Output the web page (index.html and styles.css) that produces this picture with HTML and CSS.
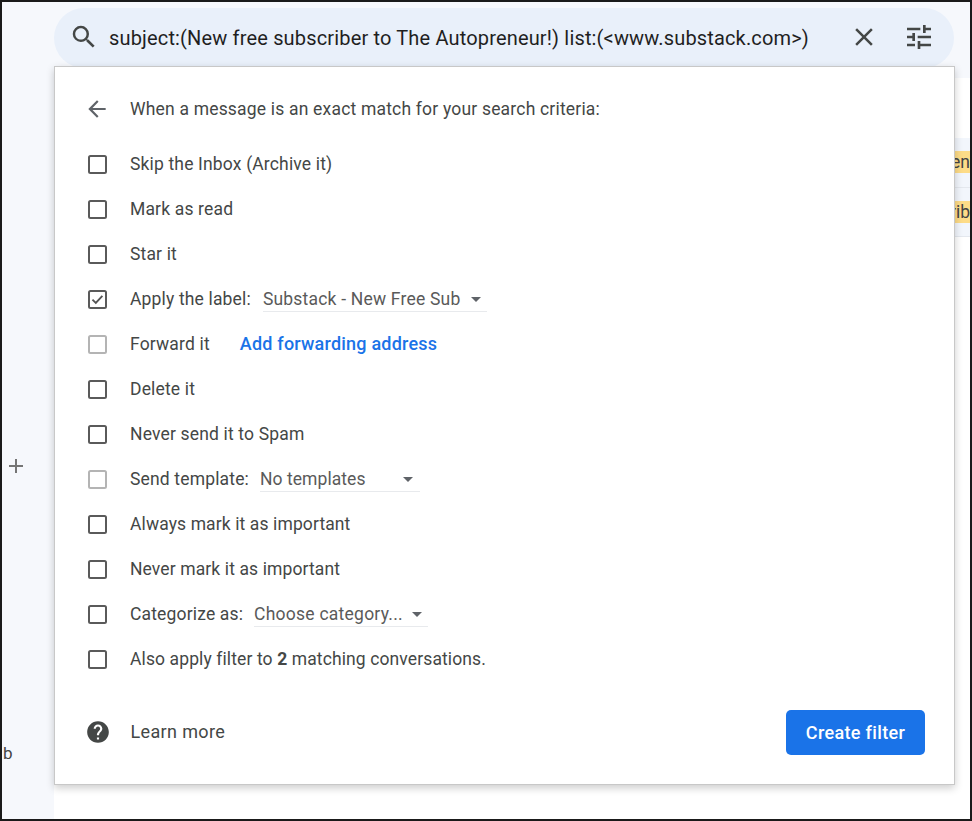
FILE: index.html
```html
<!DOCTYPE html>
<html lang="en">
<head>
<meta charset="utf-8">
<title>Create filter</title>
<link rel="stylesheet" href="styles.css">
</head>
<body>
<div class="frame">
  <aside class="rail">
    <svg class="plus" viewBox="0 0 16 16" width="16" height="16"><path d="M1 8h14M8 1v14"/></svg>
    <span class="rail-b">b</span>
  </aside>
  <main class="content">
    <div class="toolbar"></div>
    <div class="mail-list">
      <div class="mail-row"><span class="tag">en</span></div>
      <div class="mail-row"><span class="tag tag-cut">rib</span></div>
    </div>
  </main>

  <div class="search">
    <svg class="search-icon" viewBox="0 0 24 24" width="30" height="30"><path d="M15.5 14h-.79l-.28-.27A6.47 6.47 0 0 0 16 9.5 6.5 6.5 0 1 0 9.5 16c1.61 0 3.09-.59 4.23-1.57l.27.28v.79l5 4.99L20.49 19l-4.99-5zm-6 0C7.01 14 5 11.99 5 9.5S7.01 5 9.5 5 14 7.01 14 9.5 11.99 14 9.5 14z"/></svg>
    <span class="query">subject:(New free subscriber to The Autopreneur!) list:(&lt;www.substack.com&gt;)</span>
    <svg class="close-icon" viewBox="0 0 24 24" width="30" height="30"><path d="M19 6.41 17.59 5 12 10.59 6.41 5 5 6.41 10.59 12 5 17.59 6.41 19 12 13.41 17.59 19 19 17.59 13.41 12z"/></svg>
    <svg class="tune-icon" viewBox="0 0 24 24" width="32" height="32"><path d="M3 17v2h6v-2H3zM3 5v2h10V5H3zm10 16v-2h8v-2h-8v-2h-2v6h2zM7 9v2H3v2h4v2h2V9H7zm14 4v-2H11v2h10zm-6-4h2V7h4V5h-4V3h-2v6z"/></svg>
  </div>

  <section class="dialog">
    <div class="heading">
      <svg class="back" viewBox="0 0 24 24" width="26" height="26"><path d="M20 11H7.83l5.59-5.59L12 4l-8 8 8 8 1.41-1.41L7.83 13H20v-2z"/></svg>
      <span class="heading-text">When a message is an exact match for your search criteria:</span>
    </div>
    <ul class="options">
      <li class="option"><span class="box"></span><span>Skip the Inbox (Archive it)</span></li>
      <li class="option"><span class="box"></span><span>Mark as read</span></li>
      <li class="option"><span class="box"></span><span>Star it</span></li>
      <li class="option">
        <span class="box"><svg viewBox="0 0 16 16" width="15" height="15"><path d="M2.6 8.2 6.2 11.6 13.2 4.2"/></svg></span>
        <span>Apply the label:</span>
        <span class="select select-label"><span>Substack - New Free Sub</span><i class="caret"></i></span>
      </li>
      <li class="option"><span class="box box-off"></span><span>Forward it</span><a class="link">Add forwarding address</a></li>
      <li class="option"><span class="box"></span><span>Delete it</span></li>
      <li class="option"><span class="box"></span><span>Never send it to Spam</span></li>
      <li class="option">
        <span class="box box-off"></span>
        <span>Send template:</span>
        <span class="select select-template"><span>No templates</span><i class="caret"></i></span>
      </li>
      <li class="option tight"><span class="box"></span><span>Always mark it as important</span></li>
      <li class="option tight"><span class="box"></span><span>Never mark it as important</span></li>
      <li class="option">
        <span class="box"></span>
        <span>Categorize as:</span>
        <span class="select select-category"><span>Choose category...</span><i class="caret"></i></span>
      </li>
      <li class="option tight"><span class="box"></span><span>Also apply filter to <b>2</b> matching conversations.</span></li>
    </ul>
    <div class="footer">
      <div class="help">
        <svg class="help-icon" viewBox="0 0 24 24" width="26" height="26"><path d="M12 2C6.48 2 2 6.48 2 12s4.48 10 10 10 10-4.48 10-10S17.52 2 12 2zm1 17h-2v-2h2v2zm2.07-7.75-.9.92C13.45 12.9 13 13.5 13 15h-2v-.5c0-1.1.45-2.1 1.17-2.83l1.24-1.26c.37-.36.59-.86.59-1.41 0-1.1-.9-2-2-2s-2 .9-2 2H8c0-2.21 1.79-4 4-4s4 1.79 4 4c0 .88-.36 1.68-.93 2.25z"/></svg>
        <span class="help-text">Learn more</span>
      </div>
      <button class="create" type="button">Create filter</button>
    </div>
  </section>
</div>
</body>
</html>
```

FILE: styles.css
```css
* { box-sizing: border-box; }
html, body { margin: 0; padding: 0; height: 100%; }
body {
  background: #000;
  font-family: Roboto, "Noto Sans", Arial, sans-serif;
  color: #444746;
}
.frame {
  position: relative;
  display: flex;
  width: 972px;
  height: 821px;
  border: 2px solid #1a1a1a;
  background: #f6f8fc;
  overflow: hidden;
}
.rail {
  position: relative;
  flex: 0 0 52px;
  background: #f6f8fc;
}
.plus {
  position: absolute;
  left: 6px;
  top: 456px;
  fill: none;
  stroke: #757575;
  stroke-width: 2;
}
.rail-b {
  position: absolute;
  left: 1px;
  top: 741px;
  font-size: 17px;
  line-height: 20px;
  color: #444;
}
.content {
  flex: 1;
  display: flex;
  flex-direction: column;
}
.toolbar { flex: 0 0 76px; background: #f6f8fc; }
.mail-list {
  flex: 1;
  background: #fff;
  padding-top: 60px;
}
.mail-row {
  height: 49.5px;
  display: flex;
  justify-content: flex-end;
  align-items: center;
  background: #f2f6fc;
  border-bottom: 1px solid #e4e8ee;
}
.tag {
  display: block;
  width: 30px;
  height: 22px;
  background: #fddc88;
  font-size: 17.5px;
  line-height: 22px;
  color: #444;
  white-space: nowrap;
  text-align: right;
}
.tag-cut { text-indent: 10px; text-align: left; }

.search {
  position: absolute;
  left: 52px;
  top: 6px;
  width: 900px;
  height: 60px;
  display: flex;
  align-items: center;
  padding: 0 8px 0 15px;
  background: #e9f0fa;
  border-radius: 30px;
}
.search svg { fill: #444746; flex: none; margin-bottom: 2px; }
.query {
  margin-left: 10px;
  font-size: 20px;
  letter-spacing: .16px;
  color: #1f1f1f;
  white-space: nowrap;
  width: 740px;
}
.search .tune-icon { margin-left: 24px; }

.dialog {
  position: absolute;
  left: 52px;
  top: 64px;
  width: 901px;
  height: 719px;
  display: flex;
  flex-direction: column;
  padding: 0 29px 29px 30px;
  background: #fff;
  border: 1px solid #c8c8c8;
  box-shadow: 0 3px 8px rgba(0, 0, 0, .2);
  font-size: 17.5px;
  letter-spacing: .16px;
}
.heading {
  display: flex;
  align-items: center;
  gap: 20px;
  height: 74.5px;
  padding-top: 10px;
}
.heading-text { letter-spacing: .19px; }
.back { fill: #5f6368; flex: none; margin-left: -1px; }
.options {
  list-style: none;
  margin: 0;
  padding: 0;
}
.option {
  display: flex;
  align-items: center;
  height: 45px;
  white-space: nowrap;
}
.tight { letter-spacing: .11px; }
.box {
  flex: none;
  display: block;
  width: 19px;
  height: 19px;
  margin: 0 23.5px 0 2.5px;
  border: 2px solid #5a5a5a;
  border-radius: 2.5px;
}
.box svg {
  display: block;
  fill: none;
  stroke: #555;
  stroke-width: 2;
}
.box-off { border-color: #b4b4b4; }
.select {
  display: flex;
  align-items: center;
  justify-content: space-between;
  height: 26px;
  margin-left: 11px;
  padding-top: 1px;
  border-bottom: 1px solid #e8eaed;
  color: #5a5a5a;
}
.select-label { width: 224px; margin-left: 12px; padding-right: 6px; letter-spacing: .2px; }
.select-template { width: 160px; padding-right: 7px; letter-spacing: .06px; }
.select-category { width: 174px; padding-right: 6px; letter-spacing: .24px; }
.caret {
  width: 0;
  height: 0;
  border: solid transparent;
  border-width: 5px 5px 0;
  border-top-color: #5f6368;
}
.link {
  margin: 0 0 2px 30px;
  font-size: 18px;
  letter-spacing: .21px;
  color: #1a73e8;
  font-weight: 500;
}
.footer {
  flex: 1;
  display: flex;
  justify-content: space-between;
  align-items: flex-end;
}
.help {
  display: flex;
  align-items: center;
  gap: 20px;
  height: 45px;
}
.help-text { margin-bottom: 2px; font-size: 18px; letter-spacing: .35px; }
.help-icon { fill: #444746; flex: none; margin-left: -0.5px; margin-bottom: 1px; }
.create {
  width: 139px;
  height: 45px;
  border: 0;
  border-radius: 5px;
  background: #1a73e8;
  color: #fff;
  font: 500 18px Roboto, Arial, sans-serif;
  letter-spacing: .34px;
}
```
